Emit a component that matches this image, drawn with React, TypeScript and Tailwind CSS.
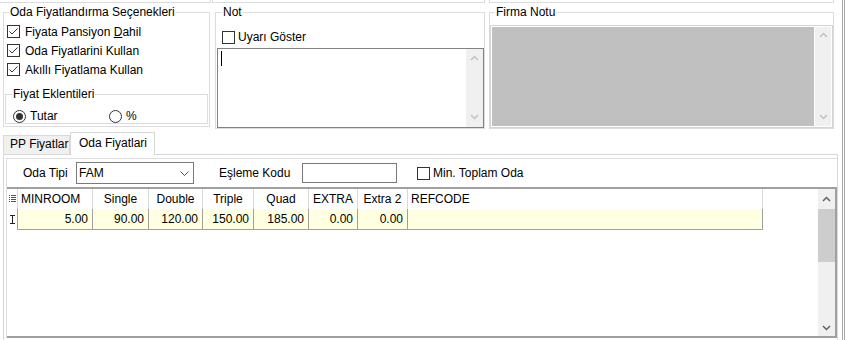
import type { ReactNode } from 'react'

function Check({ checked }: { checked?: boolean }) {
  return (
    <span className="flex h-[13px] w-[13px] shrink-0 items-center justify-center border border-[#333333] bg-white">
      {checked && (
        <svg viewBox="0 0 11 11" className="h-[11px] w-[11px]" fill="none" stroke="#333333" strokeWidth={1}>
          <polyline points="1.5,5.5 4,8 9.5,2.5" />
        </svg>
      )}
    </span>
  )
}

function Radio({ checked }: { checked?: boolean }) {
  return (
    <span className="flex h-[13px] w-[13px] shrink-0 items-center justify-center rounded-full border border-[#333333] bg-white">
      {checked && <span className="h-[7px] w-[7px] rounded-full bg-[#333333]" />}
    </span>
  )
}

function Chev({ up, color }: { up?: boolean; color: string }) {
  return (
    <svg viewBox="0 0 9 6" className="h-[6px] w-[9px]" fill="none" stroke={color} strokeWidth={1.5}>
      <path d={up ? 'M1 5 L4.5 1.5 L8 5' : 'M1 1 L4.5 4.5 L8 1'} />
    </svg>
  )
}

function Row({ children }: { children: ReactNode }) {
  return <div className="flex h-[19px] items-center gap-[5px]">{children}</div>
}

const cols = [
  { name: 'MINROOM', w: 'w-[75px]', value: '5.00', left: true },
  { name: 'Single', w: 'w-[56px]', value: '90.00' },
  { name: 'Double', w: 'w-[54px]', value: '120.00' },
  { name: 'Triple', w: 'w-[51px]', value: '150.00' },
  { name: 'Quad', w: 'w-[55px]', value: '185.00' },
  { name: 'EXTRA', w: 'w-[49px]', value: '0.00' },
  { name: 'Extra 2', w: 'w-[50px]', value: '0.00' },
  { name: 'REFCODE', w: 'w-[355px]', value: '', left: true },
]

export default function App() {
  return (
    <div className="flex h-[340px] w-[847px] overflow-hidden bg-white font-['Liberation_Sans',Arial,sans-serif] text-[12px] leading-[14px] text-black">
      <div className="flex w-[842px] flex-col">
        {/* bottom edges of the boxes scrolled out above */}
        <div className="flex h-[3px] shrink-0">
          <div className="w-[211px] border-r border-b border-[#dcdcdc]" />
          <div className="ml-[1px] w-[273px] border-x border-b border-[#dcdcdc]" />
          <div className="ml-[4px] w-[345px] border-x border-b border-[#dcdcdc]" />
        </div>

        <div className="flex h-[126px] shrink-0 items-start pt-[2px]">
          <fieldset className="ml-[3px] h-[122px] w-[207px] border border-[#dcdcdc]">
            <legend className="ml-[5px] px-[1px]">Oda Fiyatlandırma Seçenekleri</legend>
            <div className="flex flex-col pt-[3px] pl-[3px]">
              <Row>
                <Check checked />
                <span>
                  Fiyata Pansiyon <span className="underline">D</span>ahil
                </span>
              </Row>
              <Row>
                <Check checked />
                <span>Oda Fiyatlarini Kullan</span>
              </Row>
              <Row>
                <Check checked />
                <span>Akıllı Fiyatlama Kullan</span>
              </Row>
            </div>
            <fieldset className="mt-[8px] ml-[1px] h-[37px] w-[203px] border border-[#dcdcdc]">
              <legend className="ml-[6px] px-[1px]">Fiyat Eklentileri</legend>
              <div className="flex h-[22px] items-center pt-[8px] pl-[7px]">
                <div className="flex w-[96px] items-center gap-[4px]">
                  <Radio checked />
                  <span>Tutar</span>
                </div>
                <div className="flex items-center gap-[4px]">
                  <Radio />
                  <span>%</span>
                </div>
              </div>
            </fieldset>
          </fieldset>

          <fieldset className="ml-[5px] w-[270px] border border-[#dcdcdc]">
            <legend className="ml-[6px] px-[1px]">Not</legend>
            <div className="flex h-[14px] items-center gap-[3px] pl-[6px]" style={{ marginTop: 11 }}>
              <Check />
              <span>Uyarı Göster</span>
            </div>
            <div className="mt-[4px] ml-[1px] flex h-[80px] w-[267px] border border-[#828282]">
              <div className="flex-1">
                <div className="mt-[2px] ml-[3px] h-[15px] w-[1px] bg-black" />
              </div>
              <div className="flex w-[17px] flex-col items-center justify-between bg-[#f0f0f0] pt-[6px] pb-[7px]">
                <Chev up color="#c2c2c2" />
                <Chev color="#c2c2c2" />
              </div>
            </div>
          </fieldset>

          <fieldset className="ml-[4px] h-[124px] w-[345px] border border-[#dcdcdc]">
            <legend className="ml-[5px] px-[1px]">Firma Notu</legend>
            <div className="mt-[6px] flex h-[103px] border border-[#d4d4d4] p-[1px]">
              <div className="flex-1 bg-[#c0c0c0]" />
              <div className="ml-[1px] flex w-[16px] flex-col items-center justify-between bg-[#f0f0f0] pt-[5px] pb-[6px]">
                <Chev up color="#c2c2c2" />
                <Chev color="#c2c2c2" />
              </div>
            </div>
          </fieldset>
        </div>

        {/* tabs */}
        <div className="mt-[2px] mr-[4px] flex h-[24px] shrink-0 items-end">
          <div className="w-[3px]" />
          <div className="flex h-[20px] w-[67px] items-center border border-[#d9d9d9] bg-[#f0f0f0] pb-[2px] pl-[6px]">
            PP Fiyatlar
          </div>
          <div className="flex h-[23px] w-[85px] items-center border-x border-t border-[#d9d9d9] bg-white pb-[3px] pl-[8px]">
            Oda Fiyatlari
          </div>
          <div className="flex-1 border-b border-[#d9d9d9]" />
        </div>

        <div className="mr-[4px] ml-[3px] flex-1 border-x border-[#d9d9d9] pt-[3px] pl-[2px]">
          <div className="flex flex-col border-t border-l border-[#e0e0e0]">
            <div className="flex h-[28px] items-center pl-[16px]">
              <span className="w-[53px]">Oda Tipi</span>
              <div className="flex h-[22px] w-[118px] items-center justify-between border border-[#7a7a7a] pr-[4px] pl-[2px]">
                <span>FAM</span>
                <svg viewBox="0 0 9 5" className="h-[5px] w-[9px]" fill="none" stroke="#505050" strokeWidth={1}>
                  <path d="M0.5 0.5 L4.5 4.5 L8.5 0.5" />
                </svg>
              </div>
              <span className="ml-[25px] w-[83px]">Eşleme Kodu</span>
              <div className="h-[20px] w-[95px] border border-[#7a7a7a]" />
              <div className="ml-[20px] flex items-center gap-[3px]">
                <Check />
                <span>Min. Toplam Oda</span>
              </div>
            </div>

            <div className="flex h-[151px] border-t-2 border-r-2 border-b-2 border-[#a0a0a0]">
              <div className="flex flex-1 flex-col">
                <div className="flex h-[20px]">
                  <div className="flex w-[11px] items-center justify-center border-r border-[#dadada]">
                    <svg viewBox="0 0 7 8" className="h-[8px] w-[7px]" fill="#555555">
                      <rect x="0" y="0" width="1" height="1" />
                      <rect x="0" y="2" width="1" height="1" />
                      <rect x="0" y="4" width="1" height="1" />
                      <rect x="0" y="6" width="1" height="1" />
                      <rect x="2" y="0" width="5" height="1" />
                      <rect x="2" y="2" width="5" height="1" />
                      <rect x="2" y="4" width="5" height="1" />
                      <rect x="2" y="6" width="5" height="1" />
                    </svg>
                  </div>
                  {cols.map((c) => (
                    <div
                      key={c.name}
                      className={`${c.w} flex items-center border-r border-[#dadada] ${c.left ? 'pl-[3px]' : 'justify-center'}`}
                    >
                      {c.name}
                    </div>
                  ))}
                </div>
                <div className="flex h-[21px]">
                  <div className="flex w-[11px] items-center justify-center border-r border-[#a0a0a0]">
                    <svg viewBox="0 0 5 9" className="h-[9px] w-[5px]" fill="none" stroke="#222222" strokeWidth={1}>
                      <path d="M0 0.5 H5 M2.5 0.5 V8.5 M0 8.5 H5" />
                    </svg>
                  </div>
                  {cols.map((c) => (
                    <div
                      key={c.name}
                      className={`${c.w} flex items-center justify-end border-r border-b border-[#a0a0a0] bg-[#ffffe1] pr-[4px]`}
                    >
                      {c.value}
                    </div>
                  ))}
                </div>
              </div>
              <div className="flex w-[17px] flex-col bg-[#f0f0f0]">
                <div className="flex h-[20px] items-center justify-center">
                  <Chev up color="#606060" />
                </div>
                <div className="h-[53px] bg-[#cdcdcd]" />
                <div className="flex-1" />
                <div className="flex h-[17px] items-center justify-center">
                  <Chev color="#606060" />
                </div>
              </div>
            </div>
          </div>
        </div>
      </div>
      <div className="h-full w-[3px] border-x border-[#a9a9a9]" />
    </div>
  )
}
